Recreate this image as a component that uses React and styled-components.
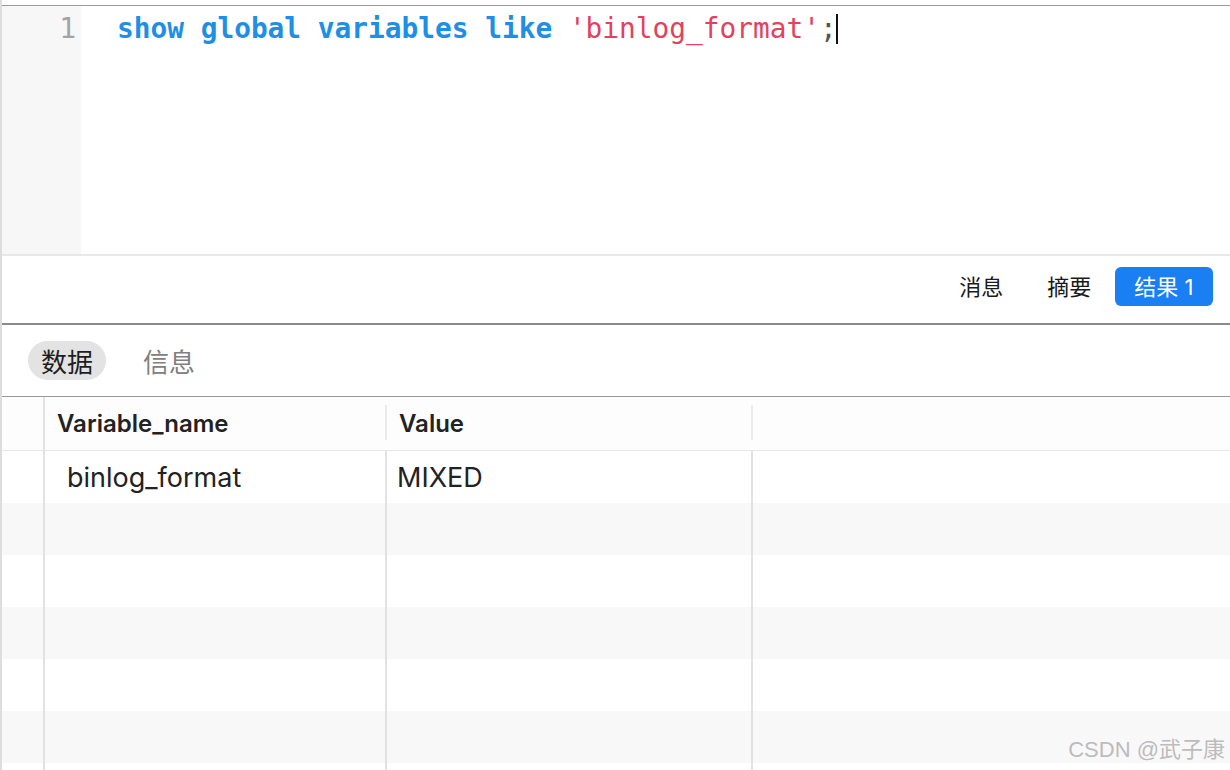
import React from "react";
import styled, { createGlobalStyle } from "styled-components";

const GlobalStyle = createGlobalStyle`
  html, body {
    margin: 0;
    padding: 0;
    background: #ffffff;
  }
  body {
    font-family: Inter, "Noto Sans CJK SC", sans-serif;
  }
`;

const Frame = styled.div`
  position: relative;
  height: 770px;
  overflow: hidden;
  border-left: 2px solid #dddddd;
  padding-top: 5px;
  box-sizing: border-box;
  display: flex;
  flex-direction: column;
`;

const Editor = styled.div`
  display: flex;
  height: 248px;
  border-top: 1px solid #9a9a9a;
  flex-shrink: 0;
`;

const Gutter = styled.div`
  width: 79px;
  background: #f7f7f7;
  box-sizing: border-box;
  padding: 7px 5px 0 0;
  text-align: right;
  font-family: "DejaVu Sans Mono", monospace;
  font-size: 28px;
  line-height: 32px;
  color: #a3a3a3;
`;

const Code = styled.div`
  flex: 1;
  padding: 7px 0 0 36px;
  font-family: "DejaVu Sans Mono", monospace;
  font-size: 27.8px;
  line-height: 32px;
  white-space: pre;
  color: #555555;
`;

const Keyword = styled.span`
  color: #1f8fe6;
  font-weight: bold;
`;

const Str = styled.span`
  color: #e2425e;
`;

const Cursor = styled.span`
  display: inline-block;
  width: 2px;
  height: 30px;
  margin-left: -1px;
  background: #111111;
  vertical-align: -6px;
`;

const Toolbar = styled.div`
  display: flex;
  justify-content: flex-end;
  align-items: flex-start;
  height: 71px;
  padding: 11px 17px 0 0;
  box-sizing: border-box;
  border-top: 2px solid #e8e8e8;
  border-bottom: 2px solid #8a8a8a;
  flex-shrink: 0;
  gap: 3px;
`;

const ToolButton = styled.div`
  height: 39px;
  padding: 0 ${(p) => (p.$active ? "19.5px" : "20.5px")};
  display: flex;
  align-items: center;
  border-radius: 6px;
  font-size: 22px;
  line-height: 1;
  background: ${(p) => (p.$active ? "#1a7ff3" : "transparent")};
  color: ${(p) => (p.$active ? "#ffffff" : "#1a1a1a")};
`;

const Tabs = styled.div`
  display: flex;
  align-items: flex-start;
  height: 72px;
  padding: 16px 0 0 26px;
  box-sizing: border-box;
  border-bottom: 1px solid #9a9a9a;
  flex-shrink: 0;
  gap: 24px;
`;

const Tab = styled.div`
  height: 39px;
  padding: 0 13px;
  display: flex;
  align-items: center;
  border-radius: 20px;
  font-size: 26px;
  background: ${(p) => (p.$active ? "#e3e3e3" : "transparent")};
  color: ${(p) => (p.$active ? "#1e1e1e" : "#808080")};
`;

const Table = styled.div`
  display: grid;
  grid-template-columns: 43px 342px 366px 1fr;
  grid-auto-rows: 52px;
  grid-template-rows: 54px;
`;

const HeadCell = styled.div`
  position: relative;
  display: flex;
  align-items: center;
  padding-left: ${(p) => p.$pad || 0}px;
  font-size: 24px;
  font-weight: 600;
  color: #222222;
  background: #fdfdfd;
  border-bottom: 1px solid #e6e6e6;
  border-right: ${(p) => (p.$full ? "2px solid #e2e2e2" : "none")};
  &::after {
    content: "";
    display: ${(p) => (p.$short ? "block" : "none")};
    position: absolute;
    right: 0;
    top: 8px;
    bottom: 10px;
    width: 2px;
    background: #ebebeb;
  }
`;

const Cell = styled.div`
  display: flex;
  align-items: center;
  padding-left: ${(p) => p.$pad || 0}px;
  font-size: 27px;
  color: #222222;
  background: ${(p) => (p.$odd ? "#f8f8f8" : "#ffffff")};
  border-right: ${(p) => (p.$last ? "none" : "2px solid #e2e2e2")};
`;

const Watermark = styled.div`
  position: absolute;
  right: 5px;
  bottom: 7px;
  font-family: "Liberation Sans", "Noto Sans CJK SC", sans-serif;
  font-size: 22px;
  color: #bcbcbc;
`;

const rows = [
  ["binlog_format", "MIXED"],
  ["", ""],
  ["", ""],
  ["", ""],
  ["", ""],
  ["", ""],
  ["", ""],
];

export default function App() {
  return (
    <>
      <GlobalStyle />
      <Frame>
        <Editor>
          <Gutter>1</Gutter>
          <Code>
            <Keyword>show global variables like</Keyword>{" "}
            <Str>'binlog_format'</Str>;<Cursor />
          </Code>
        </Editor>
        <Toolbar>
          <ToolButton>消息</ToolButton>
          <ToolButton>摘要</ToolButton>
          <ToolButton $active>结果 1</ToolButton>
        </Toolbar>
        <Tabs>
          <Tab $active>数据</Tab>
          <Tab>信息</Tab>
        </Tabs>
        <Table>
          <HeadCell $full />
          <HeadCell $pad={12} $short>Variable_name</HeadCell>
          <HeadCell $pad={12} $short>Value</HeadCell>
          <HeadCell />
          {rows.map((r, i) => (
            <React.Fragment key={i}>
              <Cell $odd={i % 2 === 1} />
              <Cell $odd={i % 2 === 1} $pad={22}>{r[0]}</Cell>
              <Cell $odd={i % 2 === 1} $pad={10}>{r[1]}</Cell>
              <Cell $odd={i % 2 === 1} $last />
            </React.Fragment>
          ))}
        </Table>
        <Watermark>CSDN @武子康</Watermark>
      </Frame>
    </>
  );
}
